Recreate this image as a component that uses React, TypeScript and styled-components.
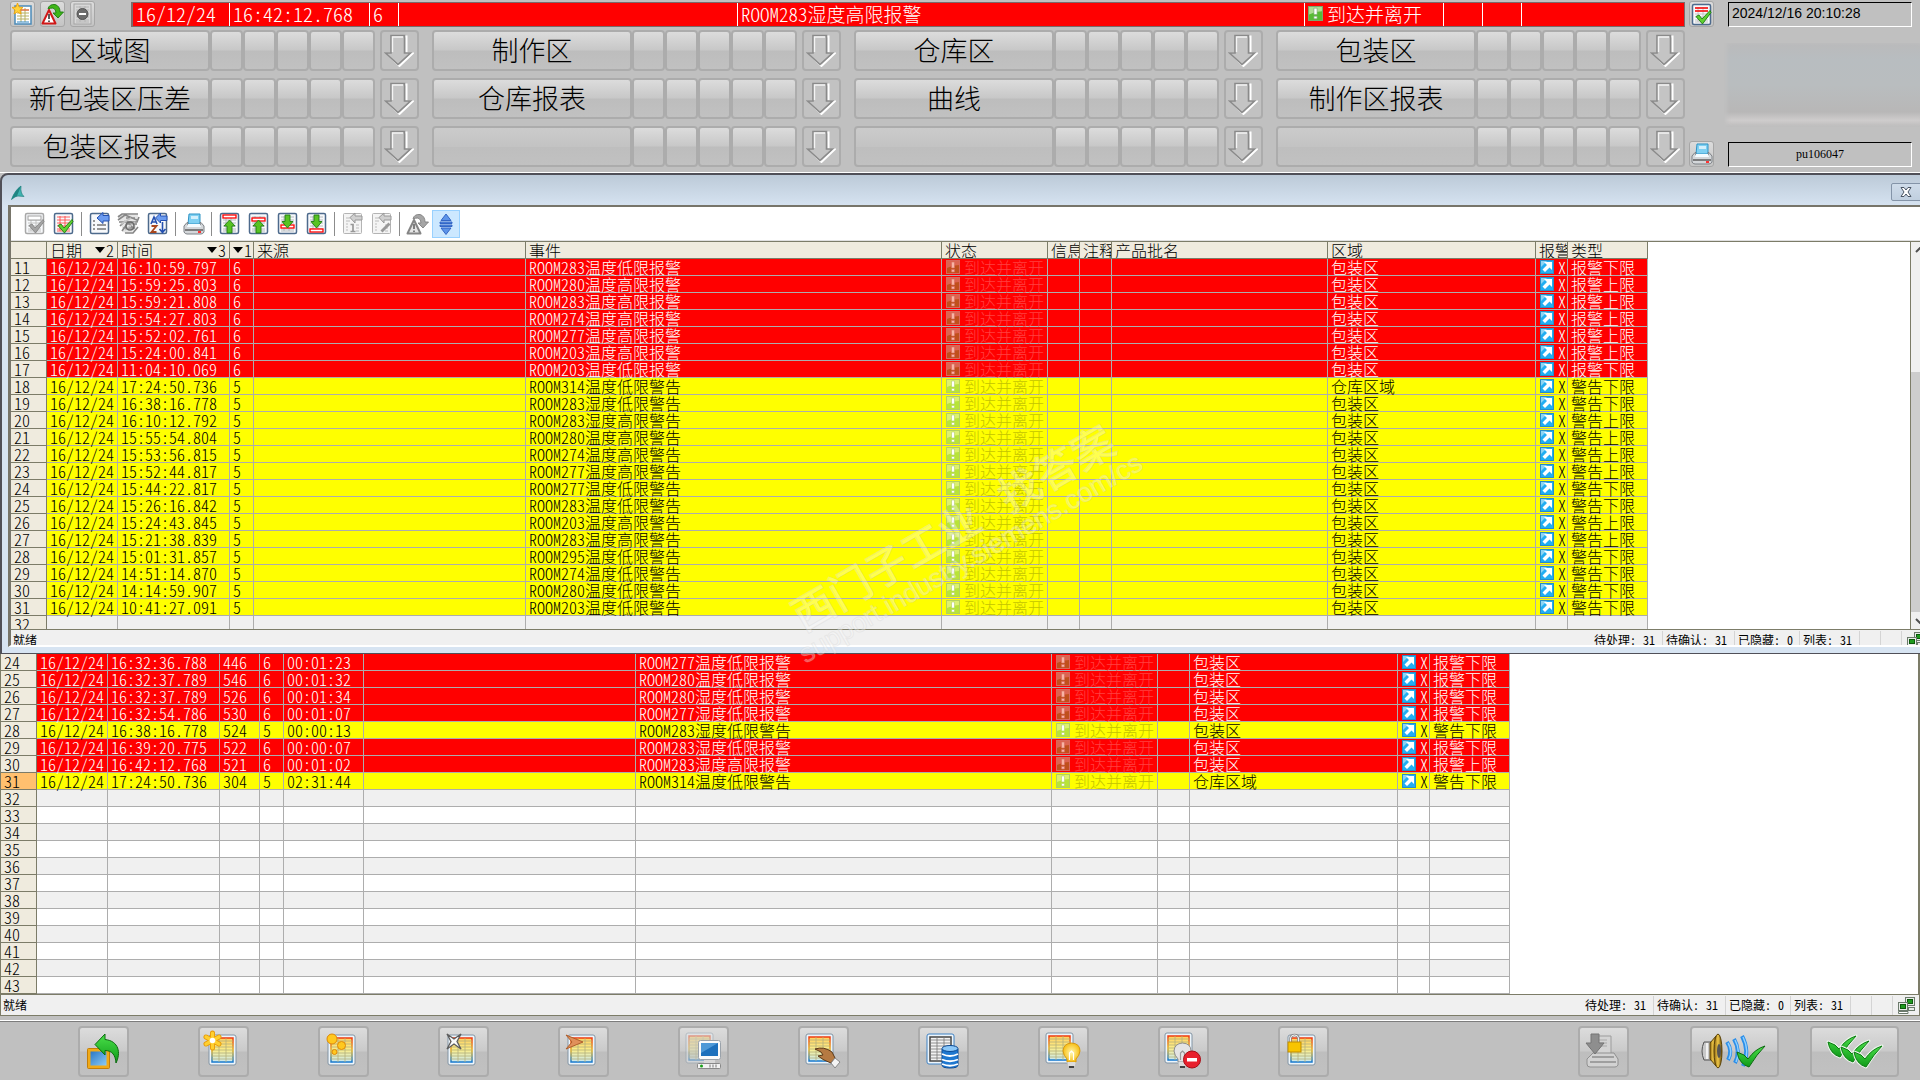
import React from 'react';
import styled, { createGlobalStyle } from 'styled-components';

const GlobalStyle = createGlobalStyle`
  * { box-sizing: border-box; }
  html, body { margin: 0; padding: 0; background: #c0c0c0; }
  body { overflow: hidden; }
  button { font: inherit; color: inherit; padding: 0; }
`;

const songti = '"Noto Sans CJK SC", "Liberation Sans", sans-serif';

const Shell = styled.div`
  position: relative;
  display: flex;
  flex-direction: column;
  height: 100vh;
  overflow: hidden;
  background: #c0c0c0;
  color: #000;
  font-family: ${songti};
  font-weight: 300;
  font-feature-settings: 'hwid';
  font-size: 16px;
`;

/* ---------- overview header ---------- */

const Header = styled.header`
  display: grid;
  grid-template-columns: 1fr 29px 198px;
  padding: 1px 8px 5px 10px;
  border-bottom: 1px solid #fff;
`;

const Overview = styled.div`
  display: flex;
  flex-direction: column;
  gap: 3px;
  min-width: 0;
`;

const TopRow = styled.div`
  display: flex;
  gap: 5px;
  height: 26px;
`;

const SmallButton = styled.button`
  flex: none;
  width: 25px;
  height: 26px;
  display: flex;
  align-items: center;
  justify-content: center;
  border: 1px solid #a6a6a6;
  border-radius: 3px;
  background: linear-gradient(#dcdcdc, #c4c4c4);
`;

const AlarmLine = styled.div`
  flex: 1;
  display: grid;
  grid-template-columns: 97px 140px 29px 339px 1fr 139px 39px 39px 162px;
  margin: 1px 0 0 31px;
  border: 2px solid #7b6a6a;
  border-width: 1px 1px 1px 2px;
  background: #f00;
  color: #fff;
`;

const AlarmCell = styled.div<{ $digits?: boolean }>`
  display: flex;
  align-items: center;
  gap: 4px;
  padding: 0 3px 2px;
  white-space: nowrap;
  font-size: ${p => (p.$digits ? 20 : 19)}px;
  line-height: 20px;
  border-right: 1px solid #fff;
  &:last-child { border-right: 0; }
`;

const NavGrid = styled.nav`
  display: grid;
  grid-template-columns: repeat(4, 1fr);
  gap: 7px 13px;
`;

const NavGroup = styled.div`
  display: flex;
  height: 41px;
`;

const NavButton = styled.button<{ $empty?: boolean }>`
  flex: 1;
  min-width: 0;
  padding-bottom: 2px;
  border: 2px solid #acacac;
  border-radius: 4px;
  background: ${p =>
    p.$empty
      ? 'linear-gradient(#cbcbcb, #c3c3c3 50%, #bebebe 52%, #c1c1c1)'
      : 'linear-gradient(#dcdcdc, #c8c8c8 48%, #bdbdbd 52%, #c1c1c1)'};
  font-size: 27px;
  line-height: 34px;
  white-space: nowrap;
`;

const NavSlot = styled.button`
  width: 33px;
  border: 2px solid #acacac;
  border-radius: 4px;
  background: linear-gradient(#dcdcdc, #c8c8c8 48%, #bdbdbd 52%, #c1c1c1);
`;

const NavArrow = styled.button`
  width: 39px;
  margin-left: 5px;
  padding-right: 2px;
  display: flex;
  align-items: center;
  justify-content: center;
  border: 2px solid #acacac;
  border-radius: 4px;
  background: #c2c2c2;
`;

const IconColumn = styled.div`
  display: flex;
  flex-direction: column;
  justify-content: space-between;
  margin-left: 4px;
  width: 25px;
`;

const Side = styled.div`
  display: flex;
  flex-direction: column;
  justify-content: space-between;
  margin: 1px 0 0 14px;
  width: 184px;
`;

const Readout = styled.output<{ $center?: boolean }>`
  display: block;
  height: 25px;
  padding: 0 3px;
  border: 1px solid;
  border-color: #000 #fff #fff #000;
  font-family: ${p => (p.$center ? '"Liberation Serif", serif' : '"Liberation Sans", sans-serif')};
  font-weight: 400;
  font-feature-settings: normal;
  font-size: ${p => (p.$center ? 12 : 14)}px;
  line-height: ${p => (p.$center ? 23 : 20)}px;
  text-align: ${p => (p.$center ? 'center' : 'left')};
`;

const Plate = styled.div`
  height: 84px;
  margin: 0 -8px 0 -4px;
  background: linear-gradient(#bababb, #b8bdc0 20%, #b9bdbf 50%, #b8b7b7 82%, #cecccc 92%, #bdbcbc);
  box-shadow: inset 3px 0 4px #c0c0c0;
`;

/* ---------- message windows ---------- */

const AlarmWindow = styled.section`
  flex: none;
  width: calc(100% + 21px);
  padding: 0 9px 6px 6px;
  border: 2px solid #505058;
  border-bottom-width: 1px;
  border-radius: 8px 8px 0 0;
  background: linear-gradient(#bccad8, #d7e4f2 32px);
`;

const TitleBar = styled.div`
  display: flex;
  align-items: center;
  justify-content: space-between;
  height: 30px;
  padding: 4px 0 0 3px;
`;

const CloseButton = styled.button`
  width: 39px;
  height: 18px;
  padding-right: 9px;
  border: 1px solid #8494a8;
  border-radius: 2px;
  background: linear-gradient(#cfdcea, #c0cfdf);
  svg { display: block; margin: 0 auto; }
`;

const WindowBody = styled.div`
  border: 1px solid #77756a;
  border-width: 2px 2px 0 3px;
  border-bottom: 2px solid #fff;
  background: #fff;
`;

const Toolbar = styled.div`
  display: flex;
  align-items: center;
  height: 34px;
  padding: 0 0 0 9px;
  border-bottom: 1px solid #e0e0e0;
`;

const ToolButton = styled.button<{ $on?: boolean }>`
  width: ${p => (p.$on ? 28 : 29)}px;
  height: 28px;
  display: flex;
  align-items: center;
  justify-content: center;
  border: 1px solid ${p => (p.$on ? '#99d1ff' : 'transparent')};
  background: ${p => (p.$on ? '#cce8ff' : 'none')};
`;

const ToolDivider = styled.span`
  width: 1px;
  height: 24px;
  margin: 0 3px;
  background: #8c8c8c;
`;

const ListArea = styled.div<{ $fill?: boolean }>`
  display: flex;
  overflow: hidden;
  background: #fff;
  ${p => (p.$fill ? 'flex: 1; min-height: 0;' : 'height: 388px; border-top: 1px solid #7c7c68;')}
`;

const ListPane = styled.div`
  flex: 1;
  min-width: 0;
  overflow: hidden;
  border-right: 1px solid #7c7c68;
`;

const Table = styled.table<{ $width: number }>`
  width: ${p => p.$width}px;
  table-layout: fixed;
  border-collapse: separate;
  border-spacing: 0;
`;

const HeadCell = styled.th`
  height: 17px;
  padding: 0 3px;
  overflow: hidden;
  white-space: nowrap;
  text-align: left;
  font-weight: 300;
  font-size: 16px;
  line-height: 16px;
  background: #efebde;
  border-right: 1px solid #7c7c68;
  border-bottom: 1px solid #7c7c68;
`;

const HeadLabel = styled.span`
  display: flex;
  justify-content: space-between;
  height: 16px;
`;

const SortMark = styled.span`
  display: flex;
  align-items: center;
  gap: 1px;
`;

const rowTone = {
  red: { bg: '#f00', fg: '#fff', dim: '#ff4040' },
  yellow: { bg: '#ff0', fg: '#000', dim: '#c4c400' },
  grey: { bg: '#f0f0f0', fg: '#000', dim: '#000' },
  white: { bg: '#fff', fg: '#000', dim: '#000' },
};
type Tone = keyof typeof rowTone;

const Row = styled.tr<{ $tone: Tone }>`
  background: ${p => rowTone[p.$tone].bg};
  color: ${p => rowTone[p.$tone].fg};
`;

const Cell = styled.td`
  height: 17px;
  padding: 0 3px;
  white-space: nowrap;
  font-size: 16px;
  line-height: 16px;
  border-right: 1px solid #adadad;
  border-bottom: 1px solid #adadad;
`;

const RowNumber = styled.th<{ $current?: boolean }>`
  height: 17px;
  padding: 0 3px;
  color: #000;
  font-weight: 300;
  font-size: 16px;
  line-height: 16px;
  text-align: left;
  background: ${p => (p.$current ? '#ffc06f' : '#efebde')};
  border-right: 1px solid #7c7c68;
  border-bottom: 1px solid #7c7c68;
`;

const IconText = styled.span<{ $tone?: Tone }>`
  display: flex;
  align-items: center;
  gap: 4px;
  height: 16px;
  padding-left: 1px;
  color: ${p => (p.$tone ? rowTone[p.$tone].dim : 'inherit')};
  svg { flex: none; }
`;

const ScrollTrack = styled.div`
  width: 17px;
  display: flex;
  flex-direction: column;
  align-items: center;
  justify-content: space-between;
  padding: 5px 0;
  background: #f0f0f0;
`;

const ScrollThumb = styled.div`
  width: 17px;
  height: 240px;
  margin: auto 0 6px;
  background: #cdcdcd;
`;

const StatusBar = styled.div<{ $low?: boolean }>`
  display: flex;
  justify-content: space-between;
  height: ${p => (p.$low ? 22 : 16)}px;
  overflow: hidden;
  border-top: 1px solid #7c7c68;
  border-bottom: ${p => (p.$low ? '1px solid #7c7c68' : '0')};
  background: #f0f0f0;
  font-size: 12px;
  line-height: 20px;
  font-weight: 400;
`;

const StatusText = styled.span`
  padding-left: 2px;
`;

const StatusCells = styled.div`
  display: flex;
`;

const StatusCell = styled.span<{ $width: number }>`
  width: ${p => p.$width}px;
  height: 20px;
  margin-top: 1px;
  padding-left: 3px;
  white-space: nowrap;
  line-height: 18px;
  border-right: 1px solid #d4d4d4;
  &:last-child { border-right: 0; padding: 1px 0 0 5px; }
`;

const Count = styled.span`
  padding-left: 7px;
`;

const LowerList = styled.section`
  flex: 1;
  min-height: 0;
  display: flex;
  flex-direction: column;
  border-left: 1px solid #7c7c68;
  border-right: 1px solid #7c7c68;
`;

/* ---------- bottom key bar ---------- */

const KeyBar = styled.footer`
  flex: none;
  display: flex;
  justify-content: space-between;
  margin-top: 4px;
  padding: 5px 21px 3px 78px;
  border-top: 1px solid #fff;
  box-shadow: inset 0 1px #7c7c7c;
`;

const KeyGroup = styled.div<{ $gap: number }>`
  display: flex;
  gap: ${p => p.$gap}px;
`;

const KeySlot = styled.div`
  width: 81px;
`;

const Key = styled.button<{ $wide?: boolean }>`
  display: block;
  width: ${p => (p.$wide ? 89 : 51)}px;
  height: 51px;
  border: 2px solid #acacac;
  border-radius: 4px;
  background: linear-gradient(#dcdcdc, #cacaca 48%, #bebebe 52%, #c1c1c1);
  svg { display: block; margin: -2px; }
`;

const Watermark = styled.div`
  position: absolute;
  left: 50%;
  top: 50%;
  display: flex;
  flex-direction: column;
  align-items: center;
  transform: translate(-50%, -50%) rotate(-30deg);
  pointer-events: none;
  white-space: nowrap;
  color: rgba(255, 255, 255, 0.32);
  -webkit-text-stroke: 1px rgba(205, 205, 205, 0.3);
  font-feature-settings: normal;
  font-weight: 400;
`;

const MarkTitle = styled.div`
  display: flex;
  gap: 28px;
  font-size: 42px;
  font-weight: 500;
  line-height: 42px;
`;

const MarkUrl = styled.div`
  font-family: 'Liberation Sans', sans-serif;
  font-size: 27px;
  line-height: 32px;
`;

/* ---------- icons ---------- */

const GREEN = '#3fb618';

const ArrowDown = () => (
  <svg width="30" height="33" viewBox="0 0 30 33" fill="none">
    <path d="M8.500 2.500H22.500V19.500H28.500L15.500 32L2.500 19.500H8.500Z" stroke="#fff" strokeWidth="2" />
    <path d="M7 1.500H20.500V19H26.500L14 30.500L1.500 19H7Z" fill="#c4c4c4" stroke="#8a8a8a" strokeWidth="1.600" />
    <path d="M8.500 18V3H19" stroke="#f4f4f4" strokeWidth="1.400" />
  </svg>
);

type MiniProps = { frame?: string; lines?: string; children?: React.ReactNode };
const Mini = ({ frame = '#4d6a8c', lines = '#a3a3a3', children }: MiniProps) => (
  <svg width="21" height="23" viewBox="0 0 21 23" fill="none">
    <rect x="1.500" y="1.500" width="18" height="20" rx="1.500" fill="#f7f9fb" stroke={frame} strokeWidth="1.500" />
    <path d="M4 5H17M4 8H17M4 11H17M4 14H17M4 17H17M4 19H17M7 4V19M12 4V19" stroke={lines} strokeWidth="0.900" />
    {children}
  </svg>
);

const tick = 'M5 13.500L8 12L11 16L19 7.500L20 9.500L11.500 21Z';
const upArrow = 'M10.500 8L16 14H13V21H8V14H5Z';
const downArrow = 'M10.500 16L5 9.500H8V3H13V9.500H16Z';

const TickIcon = ({ off }: { off?: boolean }) => (
  <Mini frame={off ? '#a8a8a8' : undefined} lines={off ? '#bcbcbc' : '#ff4c4c'}>
    {off && <rect x="4" y="4" width="13" height="4" fill="#fff" stroke="#a0a0a0" />}
    <path d={tick} fill={off ? '#a4a4a4' : '#5fd030'} stroke={off ? '#858585' : '#1d7a10'} strokeWidth="0.900" />
  </Mini>
);
const FilterIcon = () => (
  <svg width="21" height="23" viewBox="0 0 21 23" fill="none">
    <rect x="1.500" y="1.500" width="18" height="20" rx="1.500" fill="#f7f9fb" stroke="#4d6a8c" strokeWidth="1.500" />
    <path d="M4 9H6M4 13H6M4 17H6M8 13H17M8 17H17" stroke="#777" strokeWidth="1.300" />
    <path d="M8 6L14 0.500V3.500H20V9H14V11.500Z" fill="#6b9bf0" stroke="#2450b0" />
  </svg>
);
const MessIcon = () => (
  <svg width="23" height="23" viewBox="0 0 23 23" fill="none" stroke="#858585" strokeWidth="1.600">
    <path d="M1 5L5 2H21M2 10H20L22 5M3 14L8 9M1 8L8 3L20 8M5 19L10 12H20M8 21H16L21 15M6 16H18M9 6H18M10 9L17 17" />
    <path d="M1 3H21V8L18 18L12 22L6 20L4 12Z" fill="#999" fillOpacity="0.250" stroke="none" />
    <path d="M4 12L14 6M8 18L18 10" stroke="#c4c4c4" />
    <circle cx="13" cy="14" r="4" stroke="#6c6c6c" />
  </svg>
);
const SortIcon = () => (
  <svg width="21" height="23" viewBox="0 0 21 23" fill="none">
    <rect x="1.500" y="1.500" width="18" height="20" rx="1.500" fill="#f7f9fb" stroke="#4d6a8c" strokeWidth="1.500" />
    <path d="M4 12L7 5L10 12M5 10H9" stroke="#2450b0" strokeWidth="1.600" />
    <path d="M4.500 14H9.500L4.500 20H9.500" stroke="#a8461c" strokeWidth="1.800" />
    <path d="M8.500 6L13.500 1V4H20V8.500H13.500V11Z" fill="#6b9bf0" stroke="#2450b0" />
    <path d="M15.500 10V20M12.500 17L15.500 20.500L18.500 17" stroke="#2450b0" strokeWidth="1.600" />
  </svg>
);
const PrinterIcon = () => (
  <svg width="22" height="22" viewBox="0 0 22 22" fill="none">
    <path d="M6 1H17V11H5Z" fill="#7fd0f2" stroke="#2f93c4" />
    <path d="M8 3H15V6H8Z" fill="#d4f0fc" />
    <path d="M4 9.500H5L4.500 12H17.500L17 9.500H18L21 13V19Q20 21 18 21H4Q2 21 1 19V13Z" fill="#d4d7da" stroke="#7d8186" />
    <path d="M5 11H17L18 14H4Z" fill="#f3fbff" />
    <path d="M2 17H20" stroke="#666" strokeWidth="1.600" />
    <path d="M15 19H18" stroke="#f33" strokeWidth="2" />
  </svg>
);
const MoveIcon = ({ down, inner }: { down?: boolean; inner?: boolean }) => {
  const y = down ? (inner ? 13 : 17) : inner ? 6 : 3;
  return (
    <Mini lines="#b0b4b8">
      <rect x="4" y={y} width="13" height="3" fill="#fff" stroke="#f00" strokeWidth="1.300" />
      <path d={down ? downArrow : upArrow} fill="#58c322" stroke="#1f7d12" strokeWidth="0.900" />
    </Mini>
  );
};
const NoteIcon = ({ edit }: { edit?: boolean }) => (
  <svg width="21" height="23" viewBox="0 0 21 23" fill="none">
    <rect x="1.500" y="1.500" width="18" height="20" rx="1" fill="#f4f4f4" stroke="#b4b4b4" />
    <path d="M4 6H8M4 9H8M4 12H6M4 15H6M4 18H6M14 13H17M14 16H17M14 19H17" stroke="#bcbcbc" />
    <path d="M8 5.500L13 1V4H20V8H13V11Z" fill="#d0d0d0" stroke="#989898" />
    {edit ? <path d="M10 19L18 11M11 20L19 12" stroke="#989898" strokeWidth="1.500" /> : <path d="M8.500 12.500H11V19M8.500 19.500H13.500" stroke="#989898" strokeWidth="1.700" />}
  </svg>
);
const WarnIcon = ({ color }: { color?: boolean }) => (
  <svg width="23" height="22" viewBox="0 0 23 22" fill="none">
    <path d="M7 6Q8 1 14 1.500Q19 3 19 9H22.500L17 15L12 10H15Q15 6 12 5Q9 5 7 6Z" fill={color ? GREEN : '#a6a6a6'} stroke={color ? '#1b7a10' : '#808080'} strokeWidth="0.900" />
    <path d="M8 7L14.500 20.500H1.500Z" fill={color ? '#fff' : '#e6e6e6'} stroke={color ? '#d01818' : '#858585'} strokeWidth="2" strokeLinejoin="round" />
    <path d="M8 11V16M8 17.500V19" stroke={color ? '#333' : '#666'} strokeWidth="1.600" />
  </svg>
);
const ScrollIcon = () => (
  <svg width="14" height="22" viewBox="0 0 14 22" fill="#5d94e8" stroke="#2a5cc0" strokeWidth="0.900">
    <path d="M7 1L12 7.500H2Z" />
    <path d="M1 9H13V10.500H1ZM1 12H13V13.500H1Z" />
    <path d="M2 15H12L7 21.500Z" />
  </svg>
);
const SortTriangle = () => (
  <svg width="10" height="6" viewBox="0 0 10 6"><path d="M0 0H10L5 6Z" fill="#000" /></svg>
);
const StateIcon = ({ tone, size = 14 }: { tone: 'red' | 'yellow' | 'green'; size?: number }) => {
  const c = {
    red: ['#dc6450', '#c0501c', '#d8685c', '#f8b4a4'],
    yellow: ['#dcf070', '#b8e438', '#b4d060', '#ffffff'],
    green: ['#b0dc94', '#58bc34', '#7aa86c', '#ffffff'],
  }[tone];
  return (
    <svg width={size} height={size} viewBox="0 0 14 14">
      <rect x="0.500" y="0.500" width="13" height="13" fill={c[1]} stroke={c[2]} />
      <path d="M1 1H13V5Q7 5 1 8Z" fill={c[0]} />
      <path d="M5.500 2H8.500V8H5.500ZM5.500 9.500H8.500V12H5.500Z" fill={c[3]} stroke={c[2]} strokeWidth="0.600" />
    </svg>
  );
};
const LinkIcon = () => (
  <svg width="14" height="14" viewBox="0 0 14 14">
    <rect x="0.500" y="0.500" width="13" height="13" fill="#22aef2" stroke="#2a8cc4" />
    <path d="M1 1H7L1 7Z" fill="#8cd4f4" />
    <path d="M4 2H12V10L9.500 7.500L5 12L2.500 9.500L7 5Z" fill="#fff" />
  </svg>
);
const NetIcon = () => (
  <svg width="17" height="17" viewBox="0 0 17 17" stroke="#6c7a6c">
    <rect x="7.500" y="0.500" width="9" height="8" fill="#e8ece8" />
    <rect x="9.500" y="2.500" width="5" height="4" fill="#1e9a1e" stroke="#0c5a0c" />
    <rect x="10.500" y="10.500" width="6" height="3" fill="#e8ece8" />
    <rect x="0.500" y="5.500" width="9" height="8" fill="#e8ece8" />
    <rect x="2.500" y="7.500" width="5" height="4" fill="#1e9a1e" stroke="#0c5a0c" />
    <path d="M0.500 14.500H10V16.500H0.500Z" fill="#fff" />
  </svg>
);
const LogoIcon = () => (
  <svg width="14" height="15" viewBox="0 0 14 15">
    <path d="M10 1Q4 5 0.500 14.500Q4 11 7 11L13 11.500Q9 8 10 1Z" fill="#3fb3b0" stroke="#23807e" strokeWidth="0.700" />
    <path d="M10 1Q4 5 0.500 14.500Q3 12 6 11Z" fill="#1f8583" />
  </svg>
);

/* Message list sheet shared by the bottom keys */
type SheetProps = { x?: number; y?: number; w?: number; h?: number; dark?: boolean; fade?: boolean };
const Sheet = ({ x = 10, y = 9, w = 27, h = 30, dark, fade }: SheetProps) => {
  const a = x + 3, b = y + 3, iw = w - 6, ih = h - 6;
  const rows = [1, 2, 3, 4, 5, 6, 7].map(i => `M${a} ${b + (ih * i) / 8}h${iw}`).join('');
  return (
    <g opacity={fade ? 0.4 : 1}>
      <rect x={x} y={y} width={w} height={h} rx="2" fill="#edf5fb" stroke={dark ? '#3f82c4' : '#8294a4'} />
      <rect x={a} y={b} width={iw} height={ih} fill={dark ? '#f2f2f2' : 'url(#sheetFill)'} stroke={dark ? '#444' : 'url(#sheetEdge)'} strokeWidth="1.500" />
      <path d={`${rows}M${a + iw / 3} ${b}v${ih}M${a + (iw * 2) / 3} ${b}v${ih}`} stroke={dark ? '#777' : '#b4b07c'} strokeWidth="0.800" fill="none" />
    </g>
  );
};
const KeyIcon = ({ width = 51, children }: { width?: number; children: React.ReactNode }) => (
  <svg width={width} height="51" viewBox={`0 0 ${width} 51`} fill="none">{children}</svg>
);
const HiddenSvg = styled.svg`
  display: block;
  flex: none;
`;
const Defs = () => (
  <HiddenSvg width="0" height="0">
    <defs>
      <linearGradient id="sheetFill" x1="0" y1="0" x2="0" y2="1">
        <stop offset="0" stopColor="#ffcf5c" /><stop offset=".5" stopColor="#fbee8c" /><stop offset="1" stopColor="#c8e8f4" />
      </linearGradient>
      <linearGradient id="sheetEdge" x1="0" y1="0" x2="0" y2="1">
        <stop offset="0" stopColor="#f03a10" /><stop offset=".5" stopColor="#e8b020" /><stop offset="1" stopColor="#1478d0" />
      </linearGradient>
      <linearGradient id="screenFill" x1="0" y1="0" x2="1" y2="1">
        <stop offset="0" stopColor="#2a78c8" /><stop offset="1" stopColor="#8ccbf4" />
      </linearGradient>
      <linearGradient id="greenFill" x1="0" y1="0" x2="0" y2="1">
        <stop offset="0" stopColor="#4be04a" /><stop offset="1" stopColor="#0e9a18" />
      </linearGradient>
      <linearGradient id="goldFill" x1="0" y1="0" x2="1" y2="0">
        <stop offset="0" stopColor="#8a6410" /><stop offset=".5" stopColor="#f0c848" /><stop offset="1" stopColor="#6a4a08" />
      </linearGradient>
      <radialGradient id="bulbFill"><stop offset="0" stopColor="#fff8b0" /><stop offset="1" stopColor="#f8c018" /></radialGradient>
    </defs>
  </HiddenSvg>
);

const starArms = 'M14.500 7V22M8 11L21 18M21 11L8 18';
const Bulb = ({ grey, x = 0 }: { grey?: boolean; x?: number }) => (
  <g transform={`translate(${x} 0)`}>
    <path d="M33.500 17Q42 17.500 42 25Q41.500 29.500 38 33V36H29V33Q25.500 29.500 25 25Q25.500 17.500 33.500 17Z" fill={grey ? '#e4e4e4' : 'url(#bulbFill)'} stroke={grey ? '#8e8e8e' : '#d89a10'} />
    <path d="M31.500 34V27L33.500 25L35.500 27V34" stroke={grey ? '#999' : '#fff'} strokeWidth="1.200" />
    <path d="M29.500 37H37.500M30 39H37" stroke="#dcdcdc" strokeWidth="2" />
    <path d="M31 41H36" stroke="#333" strokeWidth="1.800" />
  </g>
);
const bigTick = (x: number, y: number) => `M${x} ${y + 3}L${x + 7} ${y + 6}L${x + 11} ${y + 10}Q${x + 18} ${y} ${x + 28} ${y - 3}Q${x + 20} ${y + 5} ${x + 12} ${y + 18}Q${x + 2} ${y + 15} ${x} ${y + 3}Z`;

const keys: { label: string; icon: React.ReactNode }[] = [
  { label: '返回', icon: <>
    <rect x="9.500" y="22.500" width="22" height="20" rx="1" fill="#f0aa18" stroke="#c47e08" />
    <rect x="12.500" y="25.500" width="16" height="14" fill="url(#screenFill)" />
    <path d="M17 18.500L27 8V13.500C41 15 43 27 38 37C37.500 29 34 24.500 27 24.500V29Z" fill="url(#greenFill)" stroke="#0a6a0e" />
  </> },
  { label: '新消息列表', icon: <><Sheet x={11} />
    <path d={starArms} stroke="#e89a08" strokeWidth="5" strokeLinecap="round" /><path d={starArms} stroke="#ffd030" strokeWidth="3.200" strokeLinecap="round" /><circle cx="14.500" cy="14.500" r="2.800" fill="#fff" /></> },
  { label: '旧消息列表', icon: <><Sheet x={10} />
    <circle cx="14" cy="13" r="5" fill="#ffc81e" stroke="#e08a08" /><circle cx="23.500" cy="19.500" r="4" fill="#ffc81e" stroke="#e08a08" /><circle cx="16.500" cy="26" r="2.500" fill="#ffc81e" stroke="#e08a08" /></> },
  { label: '已离开消息', icon: <><Sheet x={10} />
    <path d="M9 8L16 13L23 8L19 15.500L23 23L16 18L9 23L13 15.500Z" fill="#fafafa" stroke="#5c5c5c" strokeWidth="1.300" /></> },
  { label: '操作消息', icon: <><Sheet x={10} /><path d="M8 9L25 16L8 23L14 16Z" fill="#e0905a" stroke="#b05f2c" /></> },
  { label: '过程控制消息', icon: <><Sheet x={8} y={7} fade />
    <rect x="20.500" y="14.500" width="22" height="19" rx="2" fill="#fafafa" stroke="#9aa2aa" /><rect x="23" y="17" width="17" height="13" fill="#1d70bc" /><path d="M23 17H40L23 27Z" fill="#6fb4ea" opacity="0.600" />
    <path d="M26 34H37V37H26Z" fill="#d8d8d8" /><rect x="19.500" y="37.500" width="23" height="5" rx="1" fill="#f2f2f2" stroke="#888" /><circle cx="23.500" cy="40" r="1.500" fill="#18a018" /><path d="M32 38.500V41.500M35 38.500V41.500M38 38.500V41.500" stroke="#777" /></> },
  { label: '手动列表', icon: <><Sheet x={8} y={8} />
    <path d="M17 23Q26 20 34 26L37 32L33 37L26 34L20 30L25 29L23 26Z" fill="#b57a42" stroke="#5d3a18" /><path d="M37 32L42 36L37 42L33 37Z" fill="#f4f4f4" stroke="#888" /></> },
  { label: '归档列表', icon: <><Sheet x={9} y={8} dark />
    <path d="M24 23V39Q24 42 32 42Q40 42 40 39V23Z" fill="#1f78d0" stroke="#0c4a94" /><path d="M24 28Q32 32 40 28M24 33.500Q32 37 40 33.500M24 38Q32 41.500 40 38" stroke="#fff" strokeWidth="1.800" /><ellipse cx="32" cy="22.500" rx="8" ry="3" fill="#8cc8f8" stroke="#0c4a94" /></> },
  { label: '显示列表', icon: <><Sheet x={8} y={7} /><Bulb /></> },
  { label: '隐藏列表', icon: <><Sheet x={7} y={7} /><Bulb grey x={-9} /><circle cx="34" cy="33.500" r="8.500" fill="#e8202c" stroke="#a80c14" /><rect x="29" y="32" width="10" height="3.500" fill="#fff" /></> },
  { label: '锁定列表', icon: <><Sheet x={10} y={9} /><path d="M12.500 17V12Q13 9 16.500 9Q20 9 20.500 12V17" stroke="#8a8a8a" strokeWidth="2.500" /><path d="M12.500 17V12Q13 9 16.500 9Q20 9 20.500 12V17" stroke="#f2f2f2" /><rect x="10" y="16" width="13" height="10" fill="#f8c400" stroke="#c08c00" /></> },
];

/* ---------- data ---------- */

type Message = { n: number; time: string; no?: string; span?: string; event: string; high?: boolean; warn?: boolean; area?: string };
const make = (n: number, time: string, code: string, extra: Partial<Message> = {}): Message => {
  const warn = code.includes('W');
  const high = code.includes('H');
  const event = `ROOM${code.slice(0, 3)}${code.includes('h') ? '湿' : '温'}度${high ? '高' : '低'}限${warn ? '警告' : '报警'}`;
  return { n, time, event, warn, high, ...extra };
};

/* code: room number, h = humidity / t = temperature, H/L = limit, W = warning / A = alarm */
const upper: Message[] = [
  make(11, '16:10:59.797', '283tLA'), make(12, '15:59:25.803', '280tHA'), make(13, '15:59:21.808', '283tHA'),
  make(14, '15:54:27.803', '274tHA'), make(15, '15:52:02.761', '277tHA'), make(16, '15:24:00.841', '203tHA'),
  make(17, '11:04:10.069', '203tLA'), make(18, '17:24:50.736', '314tLW', { area: '仓库区域' }), make(19, '16:38:16.778', '283hLW'),
  make(20, '16:10:12.792', '283hHW'), make(21, '15:55:54.804', '280tHW'), make(22, '15:53:56.815', '274tHW'),
  make(23, '15:52:44.817', '277tHW'), make(24, '15:44:22.817', '277tLW'), make(25, '15:26:16.842', '283tLW'),
  make(26, '15:24:43.845', '203tHW'), make(27, '15:21:38.839', '283tHW'), make(28, '15:01:31.857', '295tLW'),
  make(29, '14:51:14.870', '274tLW'), make(30, '14:14:59.907', '280tLW'), make(31, '10:41:27.091', '203tLW'),
];
const lower: Message[] = [
  make(24, '16:32:36.788', '277tLA', { no: '446', span: '00:01:23' }), make(25, '16:32:37.789', '280tLA', { no: '546', span: '00:01:32' }),
  make(26, '16:32:37.789', '280hLA', { no: '526', span: '00:01:34' }), make(27, '16:32:54.786', '277hLA', { no: '530', span: '00:01:07' }),
  make(28, '16:38:16.778', '283hLW', { no: '524', span: '00:00:13' }), make(29, '16:39:20.775', '283hLA', { no: '522', span: '00:00:07' }),
  make(30, '16:42:12.768', '283hHA', { no: '521', span: '00:01:02' }), make(31, '17:24:50.736', '314tLW', { no: '304', span: '02:31:44', area: '仓库区域' }),
];

const upperWidths = [36, 71, 112, 24, 272, 416, 106, 32, 32, 216, 208, 32, 80];
const lowerWidths = [36, 71, 112, 40, 24, 80, 272, 416, 106, 32, 208, 32, 80];
const upperHeads: { text: string; sort?: string }[] = [
  { text: '' }, { text: '日期', sort: '2' }, { text: '时间', sort: '3' }, { text: '', sort: '1' }, { text: '来源' }, { text: '事件' },
  { text: '状态' }, { text: '信息' }, { text: '注释' }, { text: '产品批名' }, { text: '区域' }, { text: '报警' }, { text: '类型' },
];
const sum = (list: number[]) => list.reduce((a, b) => a + b, 0);

const navLabels = ['区域图', '制作区', '仓库区', '包装区', '新包装区压差', '仓库报表', '曲线', '制作区报表', '包装区报表', '', '', ''];

/* ---------- parts ---------- */

const Columns = ({ widths }: { widths: number[] }) => (
  <colgroup>{widths.map((w, i) => <col key={i} style={{ width: w }} />)}</colgroup>
);

const MessageRow = ({ m, detail }: { m: Message; detail?: boolean }) => {
  const tone = m.warn ? 'yellow' : 'red';
  return (
    <Row $tone={tone}>
      <RowNumber scope="row" $current={detail && m.n === 31}>{m.n}</RowNumber>
      <Cell>16/12/24</Cell>
      <Cell>{m.time}</Cell>
      {detail && <Cell>{m.no}</Cell>}
      <Cell>{m.warn ? '5' : '6'}</Cell>
      {detail && <Cell>{m.span}</Cell>}
      <Cell />
      <Cell>{m.event}</Cell>
      <Cell><IconText $tone={tone}><StateIcon tone={tone} />到达并离开</IconText></Cell>
      <Cell />
      {!detail && <><Cell /><Cell /></>}
      <Cell>{m.area ?? '包装区'}</Cell>
      <Cell><IconText><LinkIcon />X</IconText></Cell>
      <Cell>{(m.warn ? '警告' : '报警') + (m.high ? '上限' : '下限')}</Cell>
    </Row>
  );
};

const EmptyRow = ({ n, columns }: { n: number; columns: number }) => (
  <Row $tone={n % 2 ? 'white' : 'grey'}>
    <RowNumber scope="row">{n}</RowNumber>
    {Array.from({ length: columns - 1 }, (_, i) => <Cell key={i} />)}
  </Row>
);

const ListStatus = ({ low }: { low?: boolean }) => (
  <StatusBar $low={low}>
    <StatusText>就绪</StatusText>
    <StatusCells>
      <StatusCell $width={72}>待处理:<Count>31</Count></StatusCell>
      <StatusCell $width={72}>待确认:<Count>31</Count></StatusCell>
      <StatusCell $width={65}>已隐藏:<Count>0</Count></StatusCell>
      <StatusCell $width={60}>列表:<Count>31</Count></StatusCell>
      <StatusCell $width={21} />
      <StatusCell $width={21} />
      <StatusCell $width={26}><NetIcon /></StatusCell>
    </StatusCells>
  </StatusBar>
);

export default function App() {
  return (
    <Shell>
      <GlobalStyle />
      <Defs />
      <Header>
        <Overview>
          <TopRow>
            <SmallButton aria-label="消息列表"><svg width="21" height="23" viewBox="0 0 21 23" fill="none">
              <rect x="3" y="3" width="16" height="18" fill="#fff" stroke="#4b8ab8" strokeWidth="1.500" />
              <path d="M5 7H17M5 10H17M5 13H17M5 16H17M9 5V19M13 5V19" stroke="#b8b060" />
              <path d="M5 7H17" stroke="#f05030" /><path d="M5 19H17" stroke="#3088c8" />
              <path d="M5.500 0L7 4L11 4.500L8 7L9 11L5.500 9L2 11L3 7L0 4.500L4 4Z" fill="#ffd23c" stroke="#f0a000" strokeWidth="0.800" />
            </svg></SmallButton>
            <SmallButton aria-label="报警循环"><WarnIcon color /></SmallButton>
            <SmallButton aria-label="隐藏"><svg width="19" height="22" viewBox="0 0 19 22" fill="none">
              <rect x="1" y="1" width="17" height="20" fill="#d8d8d8" stroke="#a4a4a4" />
              <path d="M3 4H16M3 7H16M3 14H16M3 17H16M3 19H16M7 3V19M12 3V19" stroke="#b4b4b4" />
              <circle cx="9.500" cy="11" r="5.500" fill="#6c6c6c" stroke="#555" /><path d="M6 11H13" stroke="#fff" strokeWidth="2" />
            </svg></SmallButton>
            <AlarmLine>
              <AlarmCell $digits>16/12/24</AlarmCell>
              <AlarmCell $digits>16:42:12.768</AlarmCell>
              <AlarmCell $digits>6</AlarmCell>
              <AlarmCell />
              <AlarmCell>ROOM283湿度高限报警</AlarmCell>
              <AlarmCell><StateIcon tone="green" size={15} />到达并离开</AlarmCell>
              <AlarmCell /><AlarmCell /><AlarmCell />
            </AlarmLine>
          </TopRow>
          <NavGrid>
            {navLabels.map((label, i) => (
              <NavGroup key={i}>
                <NavButton $empty={!label}>{label}</NavButton>
                {[0, 1, 2, 3, 4].map(s => <NavSlot key={s} aria-label="报警类别" />)}
                <NavArrow aria-label="下一级"><ArrowDown /></NavArrow>
              </NavGroup>
            ))}
          </NavGrid>
        </Overview>
        <IconColumn>
          <SmallButton aria-label="确认">
            <Mini lines="#c0c0c0"><path d="M4 5H17M4 8H17" stroke="#f00" strokeWidth="1.500" /><path d={tick} fill="#5fd030" stroke="#1d7a10" strokeWidth="0.900" /></Mini>
          </SmallButton>
          <SmallButton aria-label="打印"><PrinterIcon /></SmallButton>
        </IconColumn>
        <Side>
          <Readout>2024/12/16 20:10:28</Readout>
          <Plate />
          <Readout $center>pu106047</Readout>
        </Side>
      </Header>

      <AlarmWindow>
        <TitleBar>
          <LogoIcon />
          <CloseButton aria-label="关闭">
            <svg width="12" height="10" viewBox="0 0 12 10"><path d="M1 0.500H4L6 3L8 0.500H11L8 5L11 9.500H8L6 7L4 9.500H1L4 5Z" fill="#fff" stroke="#4a5564" /></svg>
          </CloseButton>
        </TitleBar>
        <WindowBody>
          <Toolbar>
            <ToolButton aria-label="确认"><TickIcon off /></ToolButton>
            <ToolButton aria-label="组确认"><TickIcon /></ToolButton>
            <ToolDivider />
            <ToolButton aria-label="选择"><FilterIcon /></ToolButton>
            <ToolButton aria-label="显示选项"><MessIcon /></ToolButton>
            <ToolButton aria-label="排序"><SortIcon /></ToolButton>
            <ToolDivider />
            <ToolButton aria-label="打印"><PrinterIcon /></ToolButton>
            <ToolDivider />
            <ToolButton aria-label="第一条"><MoveIcon /></ToolButton>
            <ToolButton aria-label="上一条"><MoveIcon inner /></ToolButton>
            <ToolButton aria-label="下一条"><MoveIcon down inner /></ToolButton>
            <ToolButton aria-label="最后一条"><MoveIcon down /></ToolButton>
            <ToolDivider />
            <ToolButton aria-label="信息文本"><NoteIcon /></ToolButton>
            <ToolButton aria-label="注释"><NoteIcon edit /></ToolButton>
            <ToolDivider />
            <ToolButton aria-label="报警循环"><WarnIcon /></ToolButton>
            <ToolButton aria-label="自动滚动" $on><ScrollIcon /></ToolButton>
          </Toolbar>
          <ListArea>
            <ListPane>
              <Table $width={sum(upperWidths)}>
                <Columns widths={upperWidths} />
                <thead>
                  <tr>
                    {upperHeads.map((h, i) => (
                      <HeadCell key={i} scope="col">
                        <HeadLabel><span>{h.text}</span>{h.sort && <SortMark><SortTriangle />{h.sort}</SortMark>}</HeadLabel>
                      </HeadCell>
                    ))}
                  </tr>
                </thead>
                <tbody>
                  {upper.map(m => <MessageRow key={m.n} m={m} />)}
                  <EmptyRow n={32} columns={upperWidths.length} />
                </tbody>
              </Table>
            </ListPane>
            <ScrollTrack>
              <svg width="10" height="6" viewBox="0 0 10 6" fill="none"><path d="M1 5L5 1L9 5" stroke="#505050" strokeWidth="2" /></svg>
              <ScrollThumb />
              <svg width="10" height="6" viewBox="0 0 10 6" fill="none"><path d="M1 1L5 5L9 1" stroke="#505050" strokeWidth="2" /></svg>
            </ScrollTrack>
          </ListArea>
          <ListStatus />
        </WindowBody>
      </AlarmWindow>

      <LowerList>
        <ListArea $fill>
          <ListPane>
            <Table $width={sum(lowerWidths)}>
              <Columns widths={lowerWidths} />
              <tbody>
                {lower.map(m => <MessageRow key={m.n} m={m} detail />)}
                {Array.from({ length: 12 }, (_, i) => <EmptyRow key={i} n={32 + i} columns={lowerWidths.length} />)}
              </tbody>
            </Table>
          </ListPane>
        </ListArea>
        <ListStatus low />
      </LowerList>

      <KeyBar>
        <KeyGroup $gap={69}>
          {keys.map(k => <Key key={k.label} aria-label={k.label}><KeyIcon>{k.icon}</KeyIcon></Key>)}
        </KeyGroup>
        <KeyGroup $gap={31}>
          <KeySlot>
            <Key aria-label="打印消息">
              <KeyIcon>
                <path d="M18 10H33V30H18Z" fill="#d4d4d4" stroke="#9c9c9c" />
                <path d="M21 14H29M21 17H29M21 20H29" stroke="#aaa" />
                <path d="M15 27H36L40 33V39Q39 41 37 41H12Q9 41 9 38V33Z" fill="#d2d2d2" stroke="#909090" />
                <path d="M14 31H36M12 36H38" stroke="#8e8e8e" strokeWidth="1.500" />
                <path d="M13 8H21V17H26L17 28L8 17H13Z" fill="#8e8e8e" stroke="#747474" />
              </KeyIcon>
            </Key>
          </KeySlot>
          <Key $wide aria-label="确认蜂鸣器">
            <KeyIcon width={89}>
              <path d="M14 16Q10 25 14 34H21V16Z" fill="#c8c8c8" stroke="#555" /><path d="M17 17V33" stroke="#fff" strokeWidth="1.500" />
              <path d="M20 17L26 10V40L20 33Z" fill="url(#goldFill)" stroke="#5a4208" />
              <ellipse cx="28" cy="25" rx="4" ry="17" fill="url(#goldFill)" stroke="#5a4208" /><ellipse cx="29" cy="25" rx="2" ry="7" fill="#555" />
              <path d="M37 16Q43 25 38 34M44 13Q51 25 45 37M52 10Q60 25 53 40" stroke="#2b8ee8" strokeWidth="4" />
              <path d="M38 17Q43 25 39 33M45 14Q51 25 46 36M53 11Q60 25 54 39" stroke="#8fd0ff" strokeWidth="1.500" />
              <path d={bigTick(47, 23)} fill="url(#greenFill)" stroke="#0a6a0e" />
            </KeyIcon>
          </Key>
          <Key $wide aria-label="全部确认">
            <KeyIcon width={89}>
              {[[18, 13], [31, 18], [44, 23]].map(([x, y]) => (
                <g key={x}>
                  <path d={bigTick(x, y)} stroke="#e8f4e8" strokeWidth="3" strokeLinejoin="round" />
                  <path d={bigTick(x, y)} fill="url(#greenFill)" stroke="#0a7a10" />
                </g>
              ))}
            </KeyIcon>
          </Key>
        </KeyGroup>
      </KeyBar>
      <Watermark>
        <MarkTitle><span>西门子工业</span><span>找答案</span></MarkTitle>
        <MarkUrl>support.industry.siemens.com/cs</MarkUrl>
      </Watermark>
    </Shell>
  );
}
